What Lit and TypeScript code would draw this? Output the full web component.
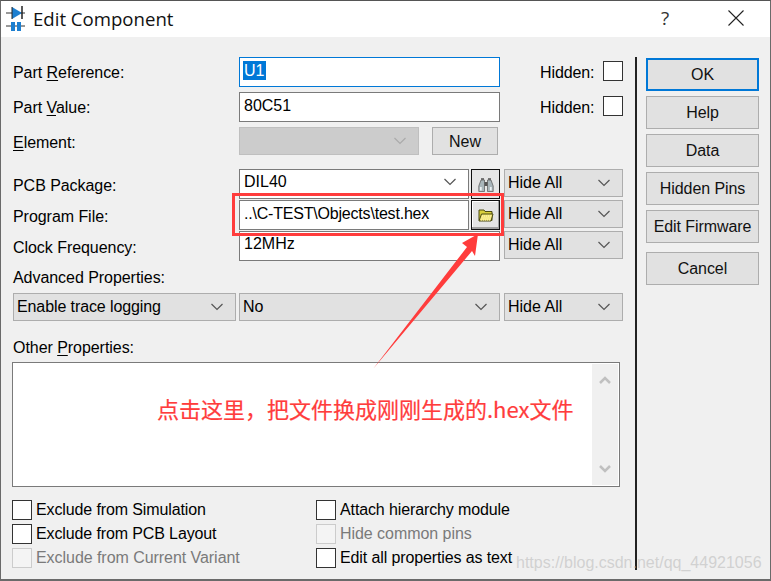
import { LitElement, html, css, svg } from "lit";
import { customElement } from "lit/decorators.js";

const chevron = html`<svg class="chev" width="14" height="8" viewBox="0 0 14 8"><path d="M1.500 1 L7 6.500 L12.500 1" fill="none" stroke="#555" stroke-width="1.200"/></svg>`;

@customElement("app-root")
export class AppRoot extends LitElement {
  static styles = css`
    :host { display: block; width: 771px; height: 581px; position: relative; overflow: hidden; font-family: "Liberation Sans", Arial, sans-serif; font-size: 16px; color: #000; background: #f0f0f0; }
    * { box-sizing: border-box; }
    .window { width: 771px; height: 581px; border: 1px solid #6a6a6a; border-top-color: #555; border-bottom-width: 2px; display: flex; flex-direction: column; background: #f0f0f0; }
    .title { height: 36px; padding-bottom: 2px; background: #fff; display: flex; align-items: center; flex: none; }
    .title .ico { margin-left: 5px; margin-right: 5px; flex: none; }
    .title .name { font-family: "Open Sans", "Noto Sans", sans-serif; font-size: 18.6px; color: #111; flex: 1; }
    .title .help { font-family: "Open Sans", sans-serif; font-size: 19px; color: #333; width: 20px; text-align: center; margin-right: 53px; }
    .title .close { margin-right: 26px; }
    .main { flex: 1; display: flex; min-height: 0; }
    .form { width: 634px; padding: 20px 0 0 11px; flex: none; }
    .divider { width: 2px; height: 513px; margin-top: 20px; background: #222; flex: none; }
    .side { padding-top: 21px; margin-left: 9px; display: flex; flex-direction: column; gap: 5px; width: 113px; }
    .btn { height: 33px; background: #e1e1e1; border: 1px solid #adadad; display: flex; align-items: center; justify-content: center; color: #111; font-size: 16px; }
    .side .btn { letter-spacing: -0.08px; }
    .side .btn.ok { border: 2px solid #0078d7; }
    .side .btn.cancel { margin-top: 4px; }
    .row { display: flex; align-items: flex-start; }
    .lab { width: 227px; padding-left: 1px; flex: none; height: 30px; line-height: 31px; white-space: nowrap; letter-spacing: -0.05px; }
    .low .lab { line-height: 33px; }
    .input { background: #fff; border: 1px solid #7a7a7a; height: 30px; line-height: 26px; padding-left: 4px; width: 261px; flex: none; white-space: nowrap; }
    .input.focus { border: 1px solid #0078d7; padding-left: 3px; line-height: 26px; }
    .sel-text { background: #0078d7; color: #fff; padding: 1px 2px 1px 1px; }
    .hid { margin-left: 40px; width: 63px; height: 30px; line-height: 31px; white-space: nowrap; letter-spacing: -0.1px; }
    .check { width: 20px; height: 20px; background: #fff; border: 1px solid #333; flex: none; }
    .check.off { border-color: #ccc; background: #f4f4f4; }
    .rc { margin-top: 4px; }
    .r2 { margin-top: 5px; }
    .select { height: 28px; background: #e1e1e1; border: 1px solid #adadad; display: flex; align-items: center; justify-content: space-between; padding: 0 11px 0 3px; flex: none; white-space: nowrap; }
    .select.dis { background: #ccc; border-color: #bfbfbf; width: 180px; }
    .new { width: 66px; height: 28px; margin-left: 13px; font-size: 16px; padding-top: 2px; }
    .hide { width: 119px; margin-left: 4px; }
    .combo { width: 230px; height: 30px; background: #fff; border: 1px solid #7a7a7a; display: flex; align-items: center; justify-content: space-between; padding: 0 11px 4px 4px; flex: none; }
    .combo.plain { padding: 0 0 2px 4px; letter-spacing: -0.2px; }
    .iconbtn { width: 29px; height: 30px; margin-left: 2px; background: #e6e6e6; border: 1px solid #111; display: flex; align-items: center; justify-content: center; flex: none; }
    .iconbtn.f { box-shadow: inset -1px -2px 0 #a0a0a0, inset 1px 1px 0 #fff; background: #e4e4e4; }
    .pcb { margin-top: 12px; }
    .prog { margin-top: 1px; }
    .clock { margin-top: 1px; }
    .clock .input { line-height: 24px; }
    .adv { margin-top: 8px; height: 18px; line-height: 18px; padding-left: 1px; letter-spacing: -0.05px; }
    .advr { margin-top: 6px; }
    .first { width: 223px; margin-left: 1px; letter-spacing: -0.1px; }
    .no { width: 261px; margin-left: 3px; }
    .other { margin-top: 18px; height: 18px; line-height: 18px; padding-left: 1px; letter-spacing: -0.05px; }
    .area { margin: 5px 0 0 0; width: 608px; height: 125px; background: #fff; border: 1px solid #7a7a7a; display: flex; justify-content: flex-end; }
    .scroll { width: 26px; margin: 1px; background: #f0f0f0; display: flex; flex-direction: column; justify-content: space-between; align-items: center; padding: 12px 0; }
    .checks { margin-top: 13px; display: grid; grid-template-columns: 304px 1fr; row-gap: 4px; }
    .cb { display: flex; align-items: center; height: 20px; gap: 4px; white-space: nowrap; letter-spacing: -0.12px; }
    .cb.off { color: #7a7a7a; letter-spacing: -0.05px; }
    u { text-decoration-thickness: 1px; text-underline-offset: 2px; }
    .overlay { position: absolute; left: 0; top: 0; pointer-events: none; }
    .note { position: absolute; left: 157px; top: 395px; font-family: "Noto Sans CJK SC", sans-serif; font-size: 22px; line-height: 26px; color: #ff3c3c; white-space: nowrap; -webkit-text-stroke: 0.2px #ff3c3c; }
    .mark { position: absolute; left: 516px; top: 553px; font-size: 16px; line-height: 20px; color: rgba(195,195,195,0.7); white-space: nowrap; }
  `;

  private hideAll() {
    return html`<div class="select hide"><span>Hide All</span>${chevron}</div>`;
  }

  render() {
    return html`
      <div class="window">
        <div class="title">
          <svg class="ico" width="22" height="26" viewBox="0 0 22 26">
            <path d="M0 8h19M0 21h19" stroke="#333" stroke-width="1"/>
            <path d="M6 2 L16 8 L6 14 Z" fill="#1d7fd0"/>
            <path d="M16 1v13" stroke="#222" stroke-width="1.500"/>
            <path d="M6 2v12" stroke="#222" stroke-width="1"/>
            <rect x="5" y="17" width="4" height="9" fill="#1d7fd0"/>
            <rect x="11" y="17" width="4" height="9" fill="#1d7fd0"/>
          </svg>
          <span class="name">Edit Component</span>
          <span class="help">?</span>
          <svg class="close" width="16" height="16" viewBox="0 0 16 16"><path d="M.5.5l15 15M15.500.5l-15 15" stroke="#222" stroke-width="1.100"/></svg>
        </div>
        <div class="main">
          <div class="form">
            <div class="row">
              <div class="lab">Part <u>R</u>eference:</div>
              <div class="input focus"><span class="sel-text">U1</span></div>
              <div class="hid">Hidden:</div><div class="check rc"></div>
            </div>
            <div class="row r2">
              <div class="lab">Part <u>V</u>alue:</div>
              <div class="input">80C51</div>
              <div class="hid">Hidden:</div><div class="check rc"></div>
            </div>
            <div class="row r2">
              <div class="lab"><u>E</u>lement:</div>
              <div class="select dis"><span></span><svg class="chev" width="14" height="8" viewBox="0 0 14 8"><path d="M1.500 1 L7 6.500 L12.500 1" fill="none" stroke="#aaa" stroke-width="1.200"/></svg></div>
              <div class="btn new">New</div>
            </div>
            <div class="row low pcb">
              <div class="lab">PCB Package:</div>
              <div class="combo"><span>DIL40</span>${chevron}</div>
              <div class="iconbtn">
                <svg width="16" height="15" viewBox="0 0 16 15">
                  <rect x="3" y="1" width="3" height="3" fill="#777"/><rect x="10" y="1" width="3" height="3" fill="#777"/>
                  <path d="M3 3L.8 9v5.500h5.700V3zM13 3l2.200 6v5.500H9.500V3z" fill="#a9b6bb" stroke="#555" stroke-width=".7"/>
                  <rect x="6.500" y="5" width="3" height="4" fill="#555"/>
                  <path d="M2.800 10v3.500M12.800 10v3.500" stroke="#eef3f5" stroke-width="1.800"/>
                </svg>
              </div>
              ${this.hideAll()}
            </div>
            <div class="row low prog">
              <div class="lab">Program File:</div>
              <div class="combo plain"><span>..\\C-TEST\\Objects\\test.hex</span></div>
              <div class="iconbtn f">
                <svg width="16" height="14" viewBox="0 0 16 14">
                  <path d="M1 2h5l1 1.500h7v9H1z" fill="#d9cf3c" stroke="#4a4a12" stroke-width="1"/>
                  <path d="M3.500 6H15l-2 7H1z" fill="#f3e678" stroke="#4a4a12" stroke-width="1"/>
                  <path d="M4 8h9M3.500 10h9M3 12h9" stroke="#fff7c0" stroke-width="1" stroke-dasharray="1 1"/>
                </svg>
              </div>
              ${this.hideAll()}
            </div>
            <div class="row low clock">
              <div class="lab">Clock Frequency:</div>
              <div class="input">12MHz</div>
              ${this.hideAll()}
            </div>
            <div class="adv">Advanced Properties:</div>
            <div class="row advr">
              <div class="select first"><span>Enable trace logging</span>${chevron}</div>
              <div class="select no"><span>No</span>${chevron}</div>
              ${this.hideAll()}
            </div>
            <div class="other">Other <u>P</u>roperties:</div>
            <div class="area">
              <div class="scroll">
                <svg width="12" height="8" viewBox="0 0 12 8"><path d="M1 7L6 2l5 5" fill="none" stroke="#c0c0c0" stroke-width="2.500"/></svg>
                <svg width="12" height="8" viewBox="0 0 12 8"><path d="M1 1l5 5 5-5" fill="none" stroke="#c0c0c0" stroke-width="2.500"/></svg>
              </div>
            </div>
            <div class="checks">
              <div class="cb"><div class="check"></div>Exclude from Simulation</div>
              <div class="cb"><div class="check"></div>Attach hierarchy module</div>
              <div class="cb"><div class="check"></div>Exclude from PCB Layout</div>
              <div class="cb off"><div class="check off"></div>Hide common pins</div>
              <div class="cb off"><div class="check off"></div>Exclude from Current Variant</div>
              <div class="cb"><div class="check"></div>Edit all properties as text</div>
            </div>
          </div>
          <div class="divider"></div>
          <div class="side">
            <div class="btn ok">OK</div>
            <div class="btn">Help</div>
            <div class="btn">Data</div>
            <div class="btn">Hidden Pins</div>
            <div class="btn">Edit Firmware</div>
            <div class="btn cancel">Cancel</div>
          </div>
        </div>
      </div>
      <svg class="overlay" width="771" height="581" viewBox="0 0 771 581">
        ${svg`<rect x="233.500" y="194.500" width="269" height="40" fill="none" stroke="#ff3c3c" stroke-width="3"/>
        <path d="M478 234L462 243L467 247L373 369L472 251L475 256Z" fill="#ff3c3c"/>`}
      </svg>
      <div class="note">点击这里，把文件换成刚刚生成的.hex文件</div>
      <div class="mark">https://blog.csdn.net/qq_44921056</div>
    `;
  }
}
